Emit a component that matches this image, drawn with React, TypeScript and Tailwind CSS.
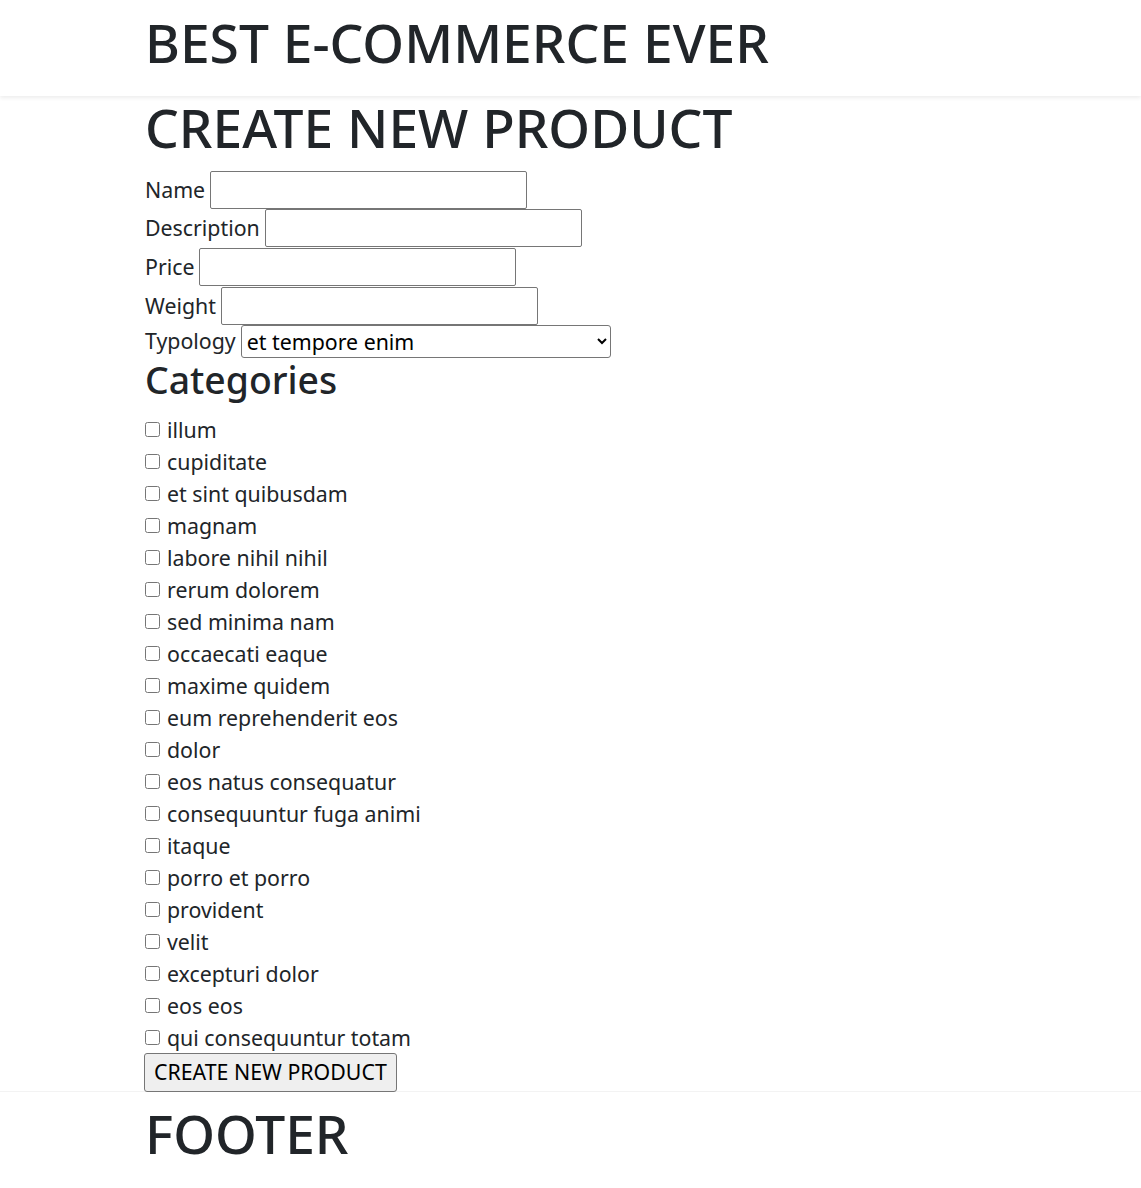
import React, { useState } from 'react';

const categories = [
  'illum',
  'cupiditate',
  'et sint quibusdam',
  'magnam',
  'labore nihil nihil',
  'rerum dolorem',
  'sed minima nam',
  'occaecati eaque',
  'maxime quidem',
  'eum reprehenderit eos',
  'dolor',
  'eos natus consequatur',
  'consequuntur fuga animi',
  'itaque',
  'porro et porro',
  'provident',
  'velit',
  'excepturi dolor',
  'eos eos',
  'qui consequuntur totam',
];

const fields = [
  { label: 'Name', h: 'h-[38px]' },
  { label: 'Description', h: 'h-[39px]' },
  { label: 'Price', h: 'h-[39px]' },
  { label: 'Weight', h: 'h-[38px]' },
];

const App: React.FC = () => {
  const [checked, setChecked] = useState<Record<string, boolean>>({});

  return (
    <div className="min-h-screen bg-white text-[#212529] font-['Noto_Sans',sans-serif] text-[21.33px] leading-[1.5]">
      {/* Header */}
      <header className="h-[96px] bg-white shadow-[0_2px_4px_rgba(0,0,0,0.075)] relative z-10">
        <div className="mx-auto w-[851px] pt-[11px]">
          <h1 className="text-[53.33px] leading-[1.2] font-medium">BEST E-COMMERCE EVER</h1>
        </div>
      </header>

      <main className="mx-auto w-[851px]">
        <h1 className="text-[53.33px] leading-[1.2] font-medium mb-[11px]">CREATE NEW PRODUCT</h1>

        <form onSubmit={(e) => e.preventDefault()}>
          {fields.map((f) => (
            <div key={f.label} className={`flex items-center gap-[5px] ${f.h}`}>
              <label>{f.label}</label>
              <input
                type="text"
                className="w-[317px] h-[38px] border border-[#767676] rounded-[2px] px-[2px] text-black"
              />
            </div>
          ))}

          <div className="flex items-center gap-[5px] h-[33px]">
            <label>Typology</label>
            <select className="w-[370px] h-[33px] border border-[#767676] rounded-[3px] bg-white text-black pl-[1px]">
              <option>et tempore enim</option>
            </select>
          </div>

          {/* Categories */}
          <h2 className="text-[37.33px] leading-[1.2] font-medium mb-[11px]">Categories</h2>
          <div>
            {categories.map((c) => (
              <label key={c} className="flex items-center h-[32px] gap-[7px]">
                <input
                  type="checkbox"
                  checked={!!checked[c]}
                  onChange={(e) => setChecked({ ...checked, [c]: e.target.checked })}
                  className="w-[15px] h-[15px] mt-[-1px]"
                />
                <span>{c}</span>
              </label>
            ))}
          </div>

          <button
            type="submit"
            className="h-[39px] px-[9px] ml-[-1px] border border-[#767676] rounded-[3px] bg-[#efefef] text-black mt-[-1px]"
          >
            CREATE NEW PRODUCT
          </button>
        </form>
      </main>

      {/* Footer */}
      <footer className="bg-white border-t border-[#f3f3f3] mt-[-1px]">
        <div className="mx-auto w-[851px] pt-[10px]">
          <h1 className="text-[53.33px] leading-[1.2] font-medium">FOOTER</h1>
        </div>
      </footer>
    </div>
  );
};

export default App;
